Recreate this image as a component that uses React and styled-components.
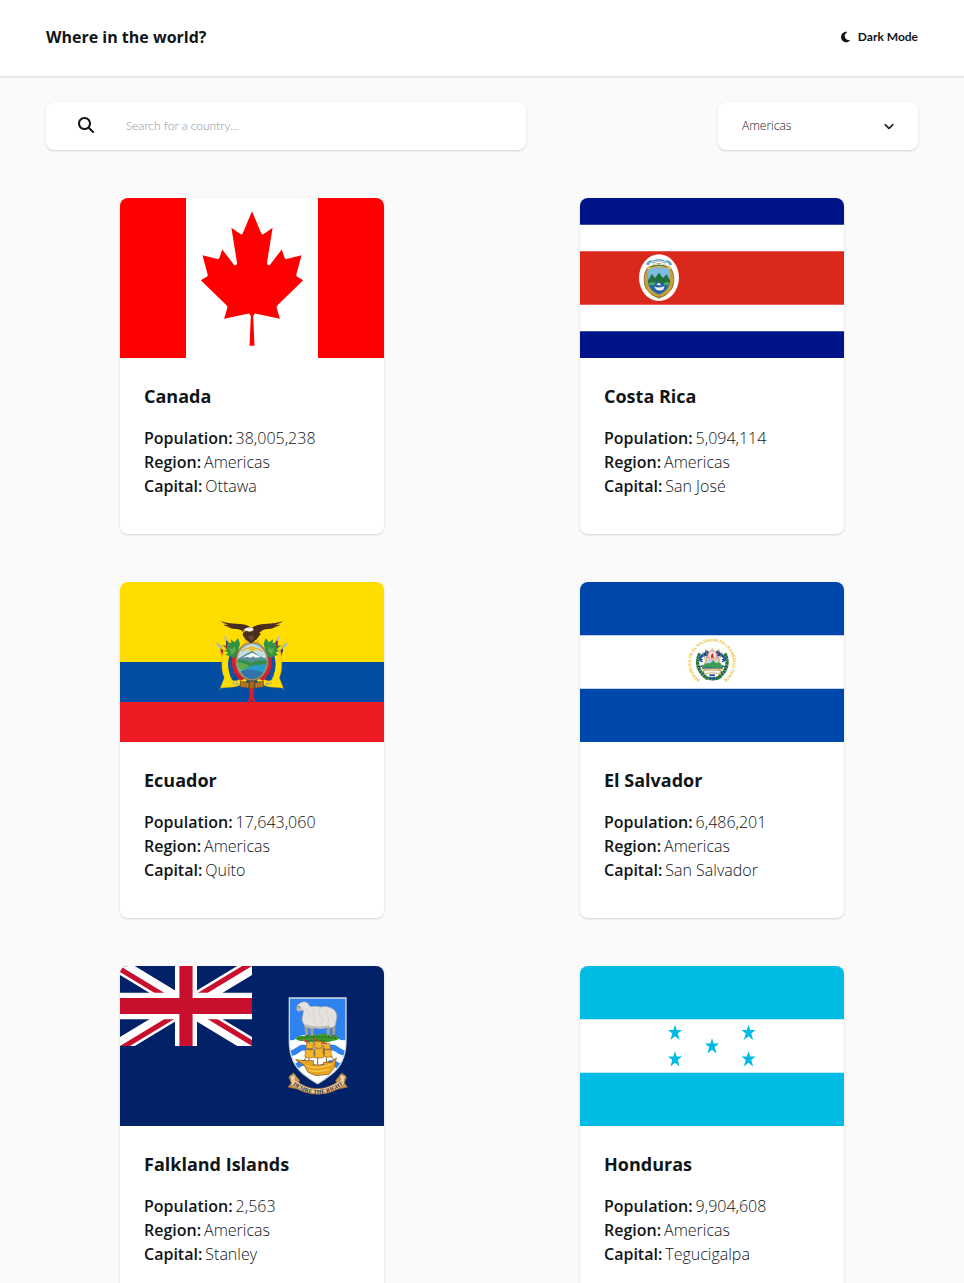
import React from "react";
import styled, { createGlobalStyle } from "styled-components";
import { FaMagnifyingGlass, FaMoon, FaChevronDown } from "react-icons/fa6";

const GlobalStyle = createGlobalStyle`
  *, *::before, *::after { box-sizing: border-box; }
  body {
    margin: 0;
    background: #fafafa;
    color: #111517;
    font-family: "Open Sans", "Noto Sans", sans-serif;
    font-size: 16px;
    line-height: 24px;
  }
  button, input, select { font: inherit; color: inherit; }
`;

const controlFont = `Lato, "Open Sans", sans-serif`;

const Header = styled.header`
  display: flex;
  align-items: center;
  justify-content: space-between;
  padding: 24px 46px 26px;
  min-height: 78px;
  background: #fff;
  border-bottom: 2px solid #e5e7eb;
`;

const SiteTitle = styled.h1`
  margin: 0;
  font-size: 16px;
  line-height: 24px;
  font-weight: 700;
`;

const ThemeButton = styled.button`
  display: flex;
  align-items: center;
  gap: 8px;
  padding: 0;
  border: 0;
  background: none;
  font-family: ${controlFont};
  font-size: 12px;
  line-height: 16px;
  font-weight: 700;
  cursor: pointer;

  svg { width: 9px; height: 12px; }
`;

const Main = styled.main`
  padding: 24px 46px 48px;
`;

const Filters = styled.form`
  display: flex;
  justify-content: space-between;
  gap: 24px;
  margin-bottom: 48px;
`;

const panel = `
  background: #fff;
  border-radius: 8px;
  box-shadow: 0 1px 3px rgba(0, 0, 0, 0.1), 0 1px 2px rgba(0, 0, 0, 0.06);
`;

const SearchBox = styled.label`
  ${panel}
  display: flex;
  align-items: center;
  gap: 32px;
  flex: 0 1 480px;
  height: 48px;
  padding: 0 32px;

  svg { flex: none; width: 16px; height: 16px; margin-bottom: 2px; }
`;

const SearchInput = styled.input`
  flex: 1;
  min-width: 0;
  padding: 0;
  border: 0;
  outline: 0;
  background: none;
  font-family: ${controlFont};
  font-size: 12px;
  line-height: 16px;
  font-weight: 300;

  &::placeholder { color: #8b929d; opacity: 1; }
`;

const RegionBox = styled.div`
  ${panel}
  position: relative;
  flex: 0 0 200px;
  height: 48px;

  svg {
    position: absolute;
    top: 18px;
    right: 24px;
    width: 10px;
    height: 12px;
    stroke: currentColor;
    stroke-width: 24;
    pointer-events: none;
  }
`;

const RegionSelect = styled.select`
  width: 100%;
  height: 100%;
  padding: 0 24px;
  border: 0;
  border-radius: 8px;
  background: none;
  appearance: none;
  font-size: 12px;
  line-height: 16px;
  font-weight: 300;
`;

const Grid = styled.section`
  display: grid;
  grid-template-columns: repeat(2, 1fr);
  justify-items: center;
  gap: 48px;
`;

const Card = styled.article`
  ${panel}
  width: 264px;
  overflow: hidden;
`;

const FlagImage = styled.svg`
  display: block;
  width: 100%;
  height: 160px;
`;

const CardBody = styled.div`
  padding: 24px 24px 36px;
`;

const CountryName = styled.h2`
  margin: 0 0 16px;
  font-size: 18px;
  line-height: 28px;
  font-weight: 700;
`;

const Facts = styled.dl`
  margin: 0;
`;

const Fact = styled.div`
  display: flex;
  gap: 3px;

  dt { font-weight: 600; }
  dd { margin: 0; font-weight: 300; }
`;

const Flag = ({ label, viewBox = "0 0 264 160", children }) => (
  <FlagImage role="img" aria-label={label} viewBox={viewBox} preserveAspectRatio="none">
    {children}
  </FlagImage>
);

const Canada = () => (
  <Flag label="Flag of Canada" viewBox="-4800 -2400 9600 4800">
    <path fill="#f00" d="M-4800-2400h2400v4800h-2400zM2400-2400h2400v4800H2400z" />
    <path fill="#fff" d="M-2400-2400h4800v4800h-4800z" />
    <path
      fill="#f00"
      d="m-90 2030 45-863a95 95 0 0 0-111-98l-859 151 116-320a65 65 0 0 0-20-73l-941-762 212-99a65 65 0 0 0 34-79l-186-572 542 115a65 65 0 0 0 73-38l105-247 423 454a65 65 0 0 0 111-57l-204-1052 327 189a65 65 0 0 0 91-27l332-652 332 652a65 65 0 0 0 91 27l327-189-204 1052a65 65 0 0 0 111 57l423-454 105 247a65 65 0 0 0 73 38l542-115-186 572a65 65 0 0 0 34 79l212 99-941 762a65 65 0 0 0-20 73l116 320-859-151a95 95 0 0 0-111 98l45 863z"
    />
  </Flag>
);

const CostaRica = () => (
  <Flag label="Flag of Costa Rica">
    <path fill="#001489" d="M0 0h264v160H0z" />
    <path fill="#fff" d="M0 26.7h264v106.6H0z" />
    <path fill="#da291c" d="M0 53.3h264v53.4H0z" />
    <g transform="translate(50 47) scale(.3333)">
      <ellipse cx="87" cy="98" rx="60" ry="70" fill="#fff" />
      <g transform="translate(87 98) scale(1.3 1.12) translate(-87 -98)">
        <path fill="#c2a03e" d="M87 58C70 64 58 68 56 78c-4 12-4 36 0 48 5 14 18 22 31 29 13-7 26-15 31-29 4-12 4-36 0-48-2-10-14-14-31-20z" />
        <path fill="none" stroke="#7d6a30" strokeWidth="2" d="M59 76c-9 14-8 40 0 54M115 76c9 14 8 40 0 54M68 141q19 18 38 0" />
        <path fill="#7cbbe2" d="M62 77q25-12 50 0v27H62z" />
        <path fill="#2465a8" d="M62 102h50c0 20-8 34-25 41-17-7-25-21-25-41z" />
        <path fill="#236f3c" d="M61 109l9-21 8 11 9-14 9 14 9-10 8 20-8 5-12-4-10 4-12-3-8 3z" />
        <path fill="#2465a8" d="M62 112q15-5 26-1t24-2l-3 12q-20 6-44 0z" />
        <path fill="#4db04c" d="M63 112q9-4 17 0l-6 6-10-1zM98 112q8-4 13-2l-3 9-9-2z" />
        <path fill="#f5f7ef" d="M76 121q10 7 24-1l-3 10q-8 5-17 0zM81 117l6-6 5 8z" />
        <path fill="none" stroke="#e9d783" strokeWidth="3" d="M61 74q26-14 52 0" />
        <path fill="none" stroke="#6aa6c2" strokeWidth="7" d="M60 64q4-13 14-8 13-9 26 0 11-5 14 8" />
        <path fill="none" stroke="#e5eef0" strokeWidth="2" d="M68 57q19-8 38 0M66 67q20-10 42 0" />
        <path fill="none" stroke="#54763b" strokeWidth="3" d="M67 70q20-10 40 0" />
      </g>
    </g>
  </Flag>
);

const wing =
  "M140 66q-12 8-26-1-4-5-14-7-18 0-31-6l8-1q-16-2-22-7l15 0q-17-4-24-10 24 7 46 7 34 0 48 13z";

const EcuadorSide = () => (
  <>
    <path fill="#8a969f" stroke="#64717b" strokeWidth="1" d="M36 99l10 12 40 78-44 50 2 2 48-52-44-82z" opacity=".65" />
    <path fill="#ffdd00" stroke="#d6a800" strokeWidth="1" d="M62 113c-14 30-15 65-4 90l-12 31 40-3c18-2 31-10 40-20l-13-12c-16 18-30 17-35 6-8-24-6-52 2-76z" />
    <path fill="#1250a3" d="M79 123q-19 36-2 78l15-8q-13-30 3-65z" />
    <path fill="#d81e2c" d="M91 113q-20 38-3 76l17 23 16-6q-28-26-20-84z" />
    <path fill="#329443" d="M52 106l17 2-5-13 14 5-1-12 12 9 10-13 6 17-5 21-12 22-15-6-11-3 7-8-11-4 8-5z" />
    <path fill="#61ae4e" d="M73 114l10 4 6-10 3 14-12 12z" />
    <path fill="#b6bdc0" d="M33 97l12 7 3 9-11-3zM57 74l8 9 3 14-8-7z" />
    <path fill="#f4d126" d="M48 112l11 2-6 17-7-5z" />
    <path fill="#ce1830" d="M49 117l6 4-5 20zM65 91l5 5-5 22-3-10z" />
    <path fill="#174b94" d="M47 115l6 5-6 9zM62 91l5 4-2 13z" />
    <path fill="none" stroke="#9da6aa" strokeWidth="3" d="M80 218l22 7M91 210l8 16" />
  </>
);

const Ecuador = () => (
  <Flag label="Flag of Ecuador">
    <path fill="#fd0" d="M0 0h264v80H0z" />
    <path fill="#034ea2" d="M0 80h264v40H0z" />
    <path fill="#ed1c24" d="M0 120h264v40H0z" />
    <g transform="translate(85 28) scale(.3333)">
      <EcuadorSide />
      <g transform="translate(281 0) scale(-1 1)"><EcuadorSide /></g>
      <ellipse cx="141" cy="154" rx="49" ry="58" fill="#b69052" stroke="#736755" strokeWidth="2" />
      <ellipse cx="141" cy="154" rx="44" ry="53" fill="#77c6e1" />
      <path fill="#c3dfe5" d="M98 143q7-34 43-41 33 6 43 38l-18 12H99z" />
      <circle cx="141" cy="118" r="9" fill="#edc33a" />
      <path fill="none" stroke="#e7b83b" strokeWidth="5" d="M109 124q31-22 64 0" />
      <path fill="#5b8f94" d="M98 147l25-15 18-9 22 15 22 9v12H98z" />
      <path fill="#fff" d="M112 143l29-15 26 13-15 2-8-4-8 5-7-4z" />
      <path fill="#348d49" d="M97 151q22-4 42 8 22-12 46-7c-1 17-7 29-14 38-30-2-61-4-69-16z" />
      <path fill="#62ad51" d="M97 157q27 2 48 21l-13 9-27-8z" />
      <path fill="#279ac8" d="M118 177q23-14 67-14-2 12-9 24-17-3-30 3-15-4-28-13z" />
      <path fill="#3273ac" d="M106 184q24-12 69 4-12 18-34 20-24-2-35-24z" />
      <path fill="#a66b20" stroke="#6b481c" strokeWidth="2" d="M106 214l28 5v14l-28-2zM175 214l-28 5v14l28-2zM132 214h17v22h-17z" />
      <path stroke="#d49542" strokeWidth="2" d="M111 216v15M119 218v14M127 219v14M154 219v14M162 218v14M170 216v15" />
      <path fill="#d81e2c" d="M133 235h14l-1 27 6 13h-9l-3-9-4 9h-9l7-13z" />
      <path fill="#4a2d1f" d={wing} />
      <g transform="translate(281 0) scale(-1 1)"><path fill="#4a2d1f" d={wing} /></g>
      <path fill="#4a2d1f" d="M116 62q16-13 36-8l15 18-12 16-16 12-17-11-9-14z" />
      <path fill="#6f4825" d="M131 74l7 6 6-6 2 12-6 7-9-8z" />
      <path fill="#f3eee7" d="M119 56q12-8 25-2l2 7-11 4-13-3-5 3z" />
      <path fill="#eba529" d="M119 58l-5 3 3 7 5-5zM120 91l12 8-8 3zM163 88l-12 9 9 4z" />
    </g>
  </Flag>
);

const SalvadorSide = () => (
  <>
    <path fill="none" stroke="#27723a" strokeWidth="10" strokeDasharray="8 1" d="M59 70q-20 45 24 76" />
    <path fill="none" stroke="#1b4da1" strokeWidth="4" d="M57 88l11 8M57 111l14-4M68 129l9-10" />
    <path fill="#1748a3" d="M70 68l-11 12 1 16 20-19zM79 60l-9 13 8 14 10-21z" />
    <path fill="#fff" d="M68 80l-5 7 12-1 7-8z" />
    <path fill="none" stroke="#b9973f" strokeWidth="2" d="M68 65l14 46M77 56l10 49" />
  </>
);

const ElSalvador = () => (
  <Flag label="Flag of El Salvador">
    <path fill="#0047ab" d="M0 0h264v160H0z" />
    <path fill="#fff" d="M0 53.3h264v53.4H0z" />
    <g transform="translate(100 48) scale(.3333)">
      <path id="salvador-motto" fill="none" d="M60 149A63 63 0 1 1 132 149" />
      <text fill="#e8bd20" fontSize="12" fontWeight="700" fontFamily="Liberation Sans, sans-serif">
        <textPath href="#salvador-motto">REPUBLICA DE EL SALVADOR EN LA AMERICA CENTRAL</textPath>
      </text>
      <SalvadorSide />
      <g transform="translate(194 0) scale(-1 1)"><SalvadorSide /></g>
      <path fill="#d7ac37" d="M97 53l33 63H64z" />
      <path fill="#b7d9ed" d="M97 59l26 51H71z" />
      <path fill="#f5c9c3" d="M97 55l18 36H79z" />
      <circle cx="97" cy="75" r="13" fill="#f3e5d9" stroke="#e58d86" strokeWidth="3" />
      <path fill="#c9322e" d="M93 77l4-9 4 9v7h-8z" />
      <path fill="#3e9c54" d="M70 106q10-10 21-6l8-9 8 8q13-4 18 6l5 9H66z" />
      <path fill="#2f78a8" d="M68 112q15-4 29 0t29 0l2 5H65z" />
      <path fill="none" stroke="#d2a52d" strokeWidth="3" d="M65 117h65" />
      <path fill="#f4f4ec" stroke="#bd9747" strokeWidth="2" d="M70 121h54l-5 11-22-4-24 4z" />
      <path fill="none" stroke="#27783e" strokeWidth="9" strokeDasharray="8 1" d="M71 138q26 18 53 0" />
      <path fill="#1b4da1" d="M89 133h15l2 17-9-5-9 5z" />
      <path stroke="#fff" strokeWidth="3" d="M90 140h14" />
    </g>
  </Flag>
);

const FalklandIslands = () => (
  <Flag label="Flag of the Falkland Islands">
    <path fill="#012169" d="M0 0h264v160H0z" />
    <svg width="132" height="80" viewBox="0 0 60 30" preserveAspectRatio="none">
      <clipPath id="saltire-quarters">
        <path d="M30 15h30v15zv15H0zH0V0zV0h30z" />
      </clipPath>
      <path stroke="#fff" strokeWidth="6" d="M0 0l60 30m0-30L0 30" />
      <path stroke="#c8102e" strokeWidth="4" clipPath="url(#saltire-quarters)" d="M0 0l60 30m0-30L0 30" />
      <path stroke="#fff" strokeWidth="10" d="M30 0v30M0 15h60" />
      <path stroke="#c8102e" strokeWidth="6" d="M30 0v30M0 15h60" />
    </svg>
    <g transform="translate(160 24) scale(.3333)">
      <clipPath id="falkland-shield">
        <path d="M28 24h170v132q-1 63-43 96-21 17-42 29-22-12-43-29-41-34-42-96z" />
      </clipPath>
      <g clipPath="url(#falkland-shield)">
        <path fill="#fff" d="M28 24h170v260H28z" />
        <path fill="#2f82ef" d="M28 24h170v127q-18 1-32-9-11-10-22-4-13 12-30 13-21-2-34-13-13-8-27 5-11 9-25 8z" />
        <path fill="none" stroke="#2f82ef" strokeWidth="17" d="M24 190q19 0 31-11 16-13 32 0 25 24 53 0 16-13 32 0 14 11 30 11M24 236q20-1 34-13 12-9 24 0 31 23 62 0 12-9 24 0 15 12 34 13" />
      </g>
      <path fill="none" stroke="#d3dbe1" strokeWidth="4" d="M28 24h170v132q-1 63-43 96-21 17-42 29-22-12-43-29-41-34-42-96z" />
      <path fill="#3d9c2c" d="M47 147q8-13 26-9 18-8 36-3 23-8 42 1 17-3 29 9-11 9-25 8-13 7-22 2-21 8-36 0-16 4-22-3-20 3-28-5z" />
      <path fill="none" stroke="#226a23" strokeWidth="4" strokeDasharray="5 4" d="M55 145q50-8 117 0M75 152h65" />
      <path fill="#9f9d96" d="M72 105h13l-1 32h-8zM91 111h10l-1 28h-8zM139 107h12l-2 31h-8zM156 100h11l-2 36h-8z" />
      <path fill="#e4e2df" stroke="#aaa9a7" strokeWidth="2" d="M55 43q14-13 28-4l8 11q18-3 31 1 18-5 33 4 17 8 15 29l-4 21q-9 13-21 6-20 9-37 2-19 5-31-5-16-13-8-34l1-13-14 1q-10-10-1-19z" />
      <path fill="#bdb9b3" d="M52 48l-3 10 5 7 10-2 1-12zM77 102q34 14 73 2l-4 7q-34 9-63-1z" />
      <path fill="none" stroke="#cfccca" strokeWidth="2" d="M85 52q-9 8 0 17 10 9 1 20M97 55q11 10 0 22 12 12 5 25M121 55q-9 14 2 24 8 10 0 25M142 57q-8 13 3 23 5 11-2 22M157 69q-8 8 2 20" />
      <path stroke="#514c49" strokeWidth="3" d="M55 50h4M78 137h7M93 139h7M142 138h8M157 136h8" />
      <path fill="none" stroke="#955f19" strokeWidth="3" d="M87 151v75M113 147v81M139 157v67M48 210l38 22M113 148l-46 72M114 149l48 61" />
      <path fill="#f3b62c" stroke="#9c6819" strokeWidth="2" d="M80 157q10 5 21 0-3 11 1 17-12 5-24 0zM105 153q10 4 20 0-2 12 3 19-12 6-24 0zM132 160q9 4 17 0-1 10 4 16-11 4-22 0zM77 177q12 6 26 0-4 15 1 25-15 5-29-1zM105 174q11 6 25 0-3 17 2 28-14 5-28 0zM134 178q10 4 19 0-2 14 4 21-12 6-24 0z" />
      <path fill="#e8a421" stroke="#875415" strokeWidth="2" d="M75 212h25v13h30v-8h25l14-14-5 29-17 21-39 4-24-10-12-22-25-16z" />
      <path fill="none" stroke="#ffdb65" strokeWidth="3" d="M79 227q31 13 77-5M87 241q28 8 60-3" />
      <path fill="#d43d2f" d="M84 153l-12-5 2 8 12 2zM110 149l-10-6 1 8 11 2zM137 158l-13-4 2 7 12 2z" />
      <path fill="#c99955" stroke="#80552c" strokeWidth="2" d="M40 248l-14 14 8 16-10 14 27 5 8-26zM186 248l14 14-7 16 10 14-27 5-9-26z" />
      <path fill="#efcea0" stroke="#9d6e3b" strokeWidth="2" d="M30 256q8 4 14-3 6 9 1 17 65 52 137 0-6-11 0-18 6 6 14 4l-5 31q-78 51-156 0z" />
      <path id="falkland-motto" fill="none" d="M38 285Q113 338 190 283" />
      <text fill="#35271c" fontSize="17" fontWeight="700" fontFamily="Liberation Serif, serif">
        <textPath href="#falkland-motto">DESIRE THE RIGHT</textPath>
      </text>
    </g>
  </Flag>
);

const honduranStars = [[95, 66.5], [168.5, 66.5], [132, 80], [95, 93], [168.5, 93]];

const Honduras = () => (
  <Flag label="Flag of Honduras">
    <path fill="#00bce4" d="M0 0h264v160H0z" />
    <path fill="#fff" d="M0 53.3h264v53.4H0z" />
    {honduranStars.map(([x, y]) => (
      <path
        key={`${x}-${y}`}
        transform={`translate(${x} ${y})`}
        fill="#00bce4"
        d="M0-8 1.7-2.5H7L2.8.9 4.6 7.4 0 3.8-4.6 7.4-2.8.9-7-2.5H-1.7z"
      />
    ))}
  </Flag>
);

const countries = [
  { name: "Canada", population: "38,005,238", capital: "Ottawa", Picture: Canada },
  { name: "Costa Rica", population: "5,094,114", capital: "San José", Picture: CostaRica },
  { name: "Ecuador", population: "17,643,060", capital: "Quito", Picture: Ecuador },
  { name: "El Salvador", population: "6,486,201", capital: "San Salvador", Picture: ElSalvador },
  { name: "Falkland Islands", population: "2,563", capital: "Stanley", Picture: FalklandIslands },
  { name: "Honduras", population: "9,904,608", capital: "Tegucigalpa", Picture: Honduras },
];

const CountryCard = ({ name, population, capital, Picture }) => (
  <Card>
    <Picture />
    <CardBody>
      <CountryName>{name}</CountryName>
      <Facts>
        <Fact><dt>Population:</dt><dd>{population}</dd></Fact>
        <Fact><dt>Region:</dt><dd>Americas</dd></Fact>
        <Fact><dt>Capital:</dt><dd>{capital}</dd></Fact>
      </Facts>
    </CardBody>
  </Card>
);

export default function App() {
  return (
    <>
      <GlobalStyle />
      <Header>
        <SiteTitle>Where in the world?</SiteTitle>
        <ThemeButton type="button"><FaMoon aria-hidden="true" />Dark Mode</ThemeButton>
      </Header>
      <Main>
        <Filters onSubmit={(event) => event.preventDefault()}>
          <SearchBox>
            <FaMagnifyingGlass aria-hidden="true" />
            <SearchInput type="search" aria-label="Search for a country" placeholder="Search for a country..." />
          </SearchBox>
          <RegionBox>
            <RegionSelect aria-label="Region" defaultValue="Americas">
              <option>Americas</option>
            </RegionSelect>
            <FaChevronDown aria-hidden="true" />
          </RegionBox>
        </Filters>
        <Grid>
          {countries.map((country) => <CountryCard key={country.name} {...country} />)}
        </Grid>
      </Main>
    </>
  );
}
